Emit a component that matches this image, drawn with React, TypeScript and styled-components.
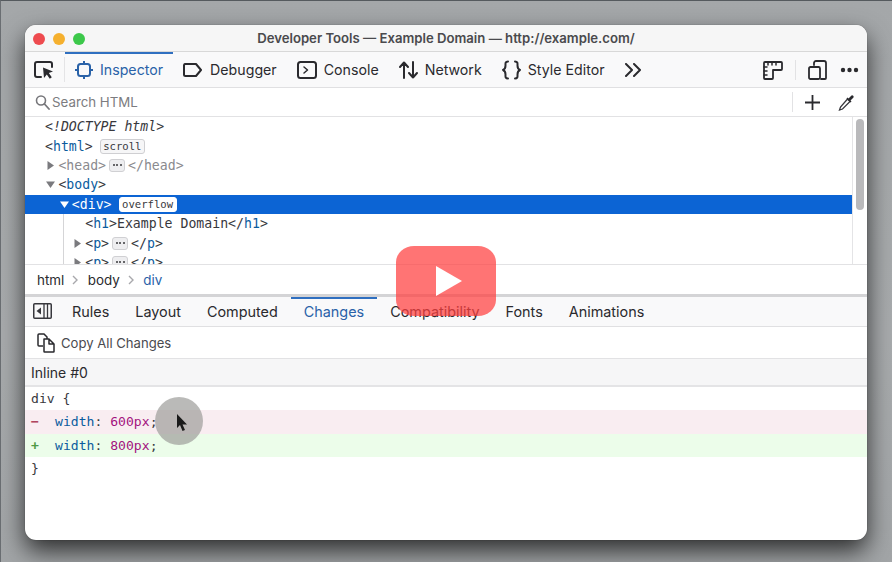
import React from 'react';
import styled, { createGlobalStyle } from 'styled-components';

const GlobalStyle = createGlobalStyle`
  html, body {
    margin: 0;
    padding: 0;
    height: 100%;
    overflow: hidden;
    font-family: Inter, "Liberation Sans", sans-serif;
  }
  #root { height: 100%; }
`;

const Page = styled.div`
  position: relative;
  box-sizing: border-box;
  width: 892px;
  height: 562px;
  padding: 24px 25px 22px 24px;
  display: flex;
  background: linear-gradient(180deg, #a4a7a9 0%, #a8abad 60%, #a2a5a7 100%);
  border-top: 1px solid #555a5e;
  border-left: 1px solid #6a6e72;
`;

const Window = styled.div`
  flex: 1;
  display: flex;
  flex-direction: column;
  background: #fff;
  border-radius: 11px;
  overflow: hidden;
  box-shadow: 0 0 1px rgba(0, 0, 0, 0.6), 0 11px 24px rgba(0, 0, 0, 0.72);
`;

const TitleBar = styled.div`
  position: relative;
  height: 26px;
  flex: none;
  display: flex;
  align-items: center;
  justify-content: center;
  background: #f6f6f6;
  border-bottom: 1px solid #d8d8d8;
  color: #4a4a4d;
  font-size: 13.15px;
  font-weight: 600;
`;

const Lights = styled.div`
  position: absolute;
  left: 8px;
  top: 8px;
  display: flex;
  gap: 8px;
`;

const Light = styled.span<{ $color: string }>`
  width: 12px;
  height: 12px;
  border-radius: 50%;
  background: ${(p) => p.$color};
`;

const Toolbar = styled.div`
  height: 35px;
  flex: none;
  display: flex;
  align-items: stretch;
  background: #f9f9fa;
  border-bottom: 1px solid #e0e0e2;
`;

const PickerButton = styled.div`
  width: 40px;
  flex: none;
  display: flex;
  align-items: center;
  padding-left: 9px;
  box-sizing: border-box;
  border-right: 1px solid #e4e4e6;
  margin: 5px 0;
`;

const ToolTab = styled.div<{ $active?: boolean }>`
  display: flex;
  align-items: center;
  gap: 7px;
  padding: 0 10px;
  font-size: 14.2px;
  color: ${(p) => (p.$active ? '#2a62a8' : '#2a2a2e')};
  box-shadow: ${(p) => (p.$active ? 'inset 0 2px 0 #2f6fc0' : 'none')};
  svg { flex: none; }
`;

const Spacer = styled.div`
  flex: 1;
`;

const ToolIcons = styled.div`
  display: flex;
  align-items: center;
  padding-right: 8px;
`;

const VDivider = styled.span`
  width: 1px;
  height: 20px;
  background: #e2e2e4;
  margin: 0 12px;
`;

const SearchRow = styled.div`
  height: 28px;
  flex: none;
  display: flex;
  align-items: center;
  padding: 0 12px 0 10px;
  border-bottom: 1px solid #e2e2e4;
  background: #fff;
`;

const SearchText = styled.span`
  flex: 1;
  margin-left: 2px;
  font-size: 13.3px;
  color: #7c7c80;
`;

const TreeArea = styled.div`
  height: 147px;
  flex: none;
  display: flex;
  overflow: hidden;
`;

const Tree = styled.div`
  flex: 1;
  position: relative;
  overflow: hidden;
  font-family: "DejaVu Sans Mono", "Liberation Mono", monospace;
  font-size: 13.2px;
  color: #38383d;
`;

const TreeRow = styled.div<{ $depth: number; $selected?: boolean }>`
  display: flex;
  align-items: center;
  height: 19.4px;
  white-space: pre;
  padding-left: ${(p) => 20 + p.$depth * 13.4}px;
  color: ${(p) => (p.$selected ? '#fff' : 'inherit')};
  background: ${(p) => (p.$selected ? '#0c64d4' : 'transparent')};
`;

const Guide = styled.span`
  position: absolute;
  left: 38px;
  top: 97px;
  bottom: 0;
  width: 1px;
  background: #d5d5d7;
`;

const Arrow = styled.svg`
  width: 9px;
  height: 9px;
  margin-left: -12px;
  margin-right: 3px;
  flex: none;
`;

const Tag = styled.span<{ $dim?: boolean; $light?: boolean }>`
  color: ${(p) => (p.$light ? '#fff' : p.$dim ? '#8a8a8e' : '#0b5c9e')};
`;

const Dim = styled.span`
  color: #8a8a8e;
`;

const Italic = styled.span`
  font-style: italic;
`;

const Badge = styled.span<{ $selected?: boolean }>`
  display: inline-block;
  margin-left: 7px;
  padding: 0 2.5px;
  height: 13px;
  line-height: 12px;
  font-size: 10.6px;
  border-radius: 3px;
  border: 1px solid ${(p) => (p.$selected ? '#fff' : '#cfcfd2')};
  background: ${(p) => (p.$selected ? '#fff' : '#f6f6f7')};
  color: #38383d;
`;

const Dots = styled.span`
  display: inline-flex;
  align-items: center;
  justify-content: center;
  gap: 1.5px;
  width: 14px;
  height: 11px;
  margin: 0 3px 0 3px;
  border-radius: 3px;
  border: 1px solid #d0d0d3;
  background: #eeeef0;
  i {
    width: 2px;
    height: 2px;
    border-radius: 50%;
    background: #38383d;
  }
`;

const Scrollbar = styled.div`
  width: 15px;
  flex: none;
  box-sizing: border-box;
  border-left: 1px solid #e4e4e6;
  padding: 2px 3px;
`;

const Thumb = styled.div`
  width: 8px;
  height: 91px;
  border-radius: 4px;
  background: #b9b9bb;
`;

const Breadcrumbs = styled.div`
  height: 29px;
  flex: none;
  display: flex;
  align-items: center;
  padding-left: 12px;
  border-top: 1px solid #e2e2e4;
  font-size: 13.4px;
  color: #2a2a2e;
`;

const Crumb = styled.span<{ $current?: boolean }>`
  color: ${(p) => (p.$current ? '#2a62a8' : '#2a2a2e')};
`;

const CrumbSep = styled.svg`
  width: 6px;
  height: 10px;
  margin: 0 9.5px 0 8px;
`;

const Splitter = styled.div`
  height: 3px;
  flex: none;
  background: #d4d4d6;
`;

const TabBar = styled.div`
  height: 29px;
  flex: none;
  display: flex;
  align-items: stretch;
  padding-left: 34px;
  position: relative;
  background: #f9f9fa;
  border-bottom: 1px solid #e0e0e2;
`;

const ToggleIcon = styled.svg`
  position: absolute;
  left: 8px;
  top: 6px;
`;

const SideTab = styled.div<{ $active?: boolean }>`
  display: flex;
  align-items: center;
  padding: 0 13px;
  font-size: 14.4px;
  color: ${(p) => (p.$active ? '#2a62a8' : '#2a2a2e')};
  box-shadow: ${(p) => (p.$active ? 'inset 0 2px 0 #2f6fc0' : 'none')};
`;

const CopyRow = styled.div`
  height: 31px;
  flex: none;
  display: flex;
  align-items: center;
  gap: 6px;
  padding-left: 12px;
  border-bottom: 1px solid #e2e2e4;
  font-size: 13.1px;
  color: #4a4a4f;
`;

const SourceHeader = styled.div`
  height: 26px;
  flex: none;
  display: flex;
  align-items: center;
  padding-left: 6px;
  background: #f6f6f7;
  border-bottom: 2px solid #e4e4e6;
  font-size: 14px;
  color: #2a2a2e;
`;

const Code = styled.div`
  font-family: "DejaVu Sans Mono", "Liberation Mono", monospace;
  font-size: 13.1px;
  color: #38383d;
`;

const CodeLine = styled.div<{ $kind?: 'removed' | 'added' }>`
  display: flex;
  align-items: center;
  height: 23.3px;
  padding-left: 6px;
  white-space: pre;
  background: ${(p) =>
    p.$kind === 'removed' ? '#f9edf1' : p.$kind === 'added' ? '#ecfdea' : 'transparent'};
`;

const Marker = styled.span<{ $kind: 'removed' | 'added' }>`
  width: 24px;
  font-weight: 700;
  color: ${(p) => (p.$kind === 'removed' ? '#b0455f' : '#4f9a45')};
`;

const Prop = styled.span`
  color: #0b5c9e;
`;

const Value = styled.span`
  color: #a3127e;
`;

const PlayOverlay = styled.div`
  position: absolute;
  left: 395px;
  top: 245px;
  width: 100px;
  height: 70px;
  border-radius: 18px / 16px;
  background: rgba(255, 62, 62, 0.72);
  display: flex;
  align-items: center;
  justify-content: center;
  padding-left: 6px;
  box-sizing: border-box;
`;

const CursorHalo = styled.div`
  position: absolute;
  left: 154px;
  top: 396px;
  width: 48px;
  height: 48px;
  border-radius: 50%;
  background: rgba(160, 160, 157, 0.72);
  display: flex;
  align-items: center;
  justify-content: center;
`;

const stroke = { fill: 'none', stroke: '#2a2a2e', strokeWidth: 2, strokeLinecap: 'round', strokeLinejoin: 'round' } as const;

const ExpandArrow = ({ open, color = '#7a7a7e' }: { open?: boolean; color?: string }) => (
  <Arrow viewBox="0 0 9 9">
    <path d={open ? 'M0 1.5h9L4.5 8z' : 'M1.5 0v9L8 4.5z'} fill={color} />
  </Arrow>
);

const Ellipsis = () => (
  <Dots>
    <i />
    <i />
    <i />
  </Dots>
);

const Sep = () => (
  <CrumbSep viewBox="0 0 6 10">
    <path d="M1 1l4 4-4 4" fill="none" stroke="#a8a8ac" strokeWidth="1.4" />
  </CrumbSep>
);

const tools = [
  {
    name: 'Debugger',
    width: 20,
    icon: <path d="M2 4h11l5 6-5 6H2.5A1.5 1.5 0 0 1 1 14.5v-9A1.5 1.5 0 0 1 2 4z" {...stroke} />,
  },
  {
    name: 'Console',
    width: 20,
    icon: (
      <>
        <rect x="1" y="2" width="18" height="16" rx="2.5" {...stroke} />
        <path d="M7 7l3.5 3L7 13" {...stroke} strokeWidth={1.5} />
      </>
    ),
  },
  {
    name: 'Network',
    width: 19,
    icon: <path d="M5 18V3M1 7l4-4.5L9 7M14 2v15.500M10 13l4 4.500 4-4.500" {...stroke} />,
  },
  {
    name: 'Style Editor',
    width: 19,
    icon: (
      <path
        d="M6 1.500c-3 0-2.500 2-2.500 4s0 3.500-2.500 4.500c2.500 1 2.500 2.500 2.500 4.500s-.5 4 2.500 4M13 1.500c3 0 2.500 2 2.500 4s0 3.500 2.500 4.500c-2.500 1-2.500 2.500-2.500 4.500s.5 4-2.500 4"
        {...stroke}
      />
    ),
  },
];

const sideTabs = ['Rules', 'Layout', 'Computed', 'Changes', 'Compatibility', 'Fonts', 'Animations'];

export default function App() {
  return (
    <Page>
      <GlobalStyle />
      <Window>
        <TitleBar>
          <Lights>
            <Light $color="#ee4b4f" />
            <Light $color="#f5b02e" />
            <Light $color="#3cc84a" />
          </Lights>
          Developer Tools — Example Domain — http://example.com/
        </TitleBar>

        <Toolbar>
          <PickerButton>
            <svg width="21" height="20" viewBox="0 0 21 20">
              <path d="M7 17H3a2 2 0 0 1-2-2V4a2 2 0 0 1 2-2h13a2 2 0 0 1 2 2v3" {...stroke} />
              <path d="M9 7.500l10 4-4.200 1.600 3 4.200-2 1.500-3-4.300L10 18z" fill="#2a2a2e" />
            </svg>
          </PickerButton>
          <ToolTab $active>
            <svg width="18" height="20" viewBox="0 0 18 20">
              <rect x="3" y="4" width="12" height="12" rx="2.500" fill="none" stroke="#2a62a8" strokeWidth="2" />
              <path d="M9 1v3M9 16v3M0 10h3M15 10h3" stroke="#2a62a8" strokeWidth="2" />
            </svg>
            Inspector
          </ToolTab>
          {tools.map((tool) => (
            <ToolTab key={tool.name}>
              <svg width={tool.width} height="20" viewBox={`0 0 ${tool.width} 20`}>
                {tool.icon}
              </svg>
              {tool.name}
            </ToolTab>
          ))}
          <ToolTab>
            <svg width="18" height="14" viewBox="0 0 18 14">
              <path d="M2 1l6 6-6 6M10 1l6 6-6 6" {...stroke} />
            </svg>
          </ToolTab>
          <Spacer />
          <ToolIcons>
            <svg width="20" height="20" viewBox="0 0 20 20">
              <path
                d="M2 2h16a1 1 0 0 1 1 1v6a1 1 0 0 1-1 1h-8v8a1 1 0 0 1-1 1H2a1 1 0 0 1-1-1V3a1 1 0 0 1 1-1z"
                {...stroke}
                strokeWidth={1.8}
              />
              <path d="M5 2v3M9 2v3M13 2v3M1 7h3M1 11h3M1 15h3" {...stroke} strokeWidth={1.5} />
            </svg>
            <VDivider />
            <svg width="19" height="20" viewBox="0 0 19 20" style={{ marginRight: 13 }}>
              <path d="M6 5V3a2 2 0 0 1 2-2h8a2 2 0 0 1 2 2v15a1 1 0 0 1-1 1h-4" {...stroke} strokeWidth={1.8} />
              <rect x="1" y="7" width="11" height="12" rx="1.500" {...stroke} strokeWidth={1.8} />
            </svg>
            <svg width="19" height="6" viewBox="0 0 19 6">
              <circle cx="3" cy="3" r="2.200" fill="#2a2a2e" />
              <circle cx="9.500" cy="3" r="2.200" fill="#2a2a2e" />
              <circle cx="16" cy="3" r="2.200" fill="#2a2a2e" />
            </svg>
          </ToolIcons>
        </Toolbar>

        <SearchRow>
          <svg width="15" height="16" viewBox="0 0 15 16">
            <circle cx="6" cy="6.500" r="4.500" fill="none" stroke="#77777b" strokeWidth="1.600" />
            <path d="M9.500 10l4.500 5" stroke="#77777b" strokeWidth="1.800" strokeLinecap="round" />
          </svg>
          <SearchText>Search HTML</SearchText>
          <VDivider />
          <svg width="15" height="15" viewBox="0 0 15 15">
            <path d="M7.500 0v15M0 7.500h15" stroke="#2a2a2e" strokeWidth="1.800" />
          </svg>
          <svg width="17" height="17" viewBox="0 0 17 17" style={{ marginLeft: 18 }}>
            <path d="M9.500 5l2.500 2.500-7.500 7.500-3 1 1-3z" fill="#fff" stroke="#38383d" strokeWidth="1.300" />
            <path d="M8.500 4.500l4 4 1-1-1-1 3-3a1.500 1.500 0 0 0-2-2l-3 3-1-1z" fill="#2a2a2e" />
          </svg>
        </SearchRow>

        <TreeArea>
          <Tree>
            <Guide />
            <TreeRow $depth={0}>
              <Italic>{'<!DOCTYPE html>'}</Italic>
            </TreeRow>
            <TreeRow $depth={0}>
              {'<'}
              <Tag>html</Tag>
              {'>'}
              <Badge>scroll</Badge>
            </TreeRow>
            <TreeRow $depth={1}>
              <ExpandArrow />
              <Dim>{'<head>'}</Dim>
              <Ellipsis />
              <Dim>{'</head>'}</Dim>
            </TreeRow>
            <TreeRow $depth={1}>
              <ExpandArrow open />
              {'<'}
              <Tag>body</Tag>
              {'>'}
            </TreeRow>
            <TreeRow $depth={2} $selected>
              <ExpandArrow open color="#fff" />
              {'<'}
              <Tag $light>div</Tag>
              {'>'}
              <Badge $selected>overflow</Badge>
            </TreeRow>
            <TreeRow $depth={3}>
              {'<'}
              <Tag>h1</Tag>
              {'>Example Domain</'}
              <Tag>h1</Tag>
              {'>'}
            </TreeRow>
            <TreeRow $depth={3}>
              <ExpandArrow />
              {'<'}
              <Tag>p</Tag>
              {'>'}
              <Ellipsis />
              {'</'}
              <Tag>p</Tag>
              {'>'}
            </TreeRow>
            <TreeRow $depth={3}>
              <ExpandArrow />
              {'<'}
              <Tag>p</Tag>
              {'>'}
              <Ellipsis />
              {'</'}
              <Tag>p</Tag>
              {'>'}
            </TreeRow>
          </Tree>
          <Scrollbar>
            <Thumb />
          </Scrollbar>
        </TreeArea>

        <Breadcrumbs>
          <Crumb>html</Crumb>
          <Sep />
          <Crumb>body</Crumb>
          <Sep />
          <Crumb $current>div</Crumb>
        </Breadcrumbs>
        <Splitter />

        <TabBar>
          <ToggleIcon width="19" height="16" viewBox="0 0 19 16">
            <rect x="0.750" y="0.750" width="17.500" height="14.500" rx="1" fill="none" stroke="#38383d" strokeWidth="1.500" />
            <path d="M11 1v14M14.500 1v14" stroke="#38383d" strokeWidth="1.300" />
            <path d="M8 4.500v7L3.500 8z" fill="#38383d" />
          </ToggleIcon>
          {sideTabs.map((tab) => (
            <SideTab key={tab} $active={tab === 'Changes'}>
              {tab}
            </SideTab>
          ))}
        </TabBar>

        <CopyRow>
          <svg width="18" height="20" viewBox="0 0 18 20">
            <path d="M6 13H2a1 1 0 0 1-1-1V2a1 1 0 0 1 1-1h5l3 3v2" fill="none" stroke="#2a2a2e" strokeWidth="1.500" />
            <path d="M7 6h5l5 5v7.500a.5.5 0 0 1-.5.5H7.500a.5.5 0 0 1-.5-.5zM12 6v5h5" fill="#fff" stroke="#2a2a2e" strokeWidth="1.500" strokeLinejoin="round" />
          </svg>
          Copy All Changes
        </CopyRow>

        <SourceHeader>Inline #0</SourceHeader>

        <Code>
          <CodeLine>{'div {'}</CodeLine>
          <CodeLine $kind="removed">
            <Marker $kind="removed">−</Marker>
            <Prop>width</Prop>: <Value>600px</Value>;
          </CodeLine>
          <CodeLine $kind="added">
            <Marker $kind="added">+</Marker>
            <Prop>width</Prop>: <Value>800px</Value>;
          </CodeLine>
          <CodeLine>{'}'}</CodeLine>
        </Code>
      </Window>

      <PlayOverlay>
        <svg width="26" height="30" viewBox="0 0 26 30">
          <path d="M0 0l26 15L0 30z" fill="#fff" />
        </svg>
      </PlayOverlay>
      <CursorHalo>
        <svg width="12" height="18" viewBox="0 0 12 18" style={{ marginLeft: 6, marginTop: 4 }}>
          <path d="M1 0v14l3-3 2.500 6 2.500-1-2.500-5.500H11z" fill="#1a1a1a" />
        </svg>
      </CursorHalo>
    </Page>
  );
}
